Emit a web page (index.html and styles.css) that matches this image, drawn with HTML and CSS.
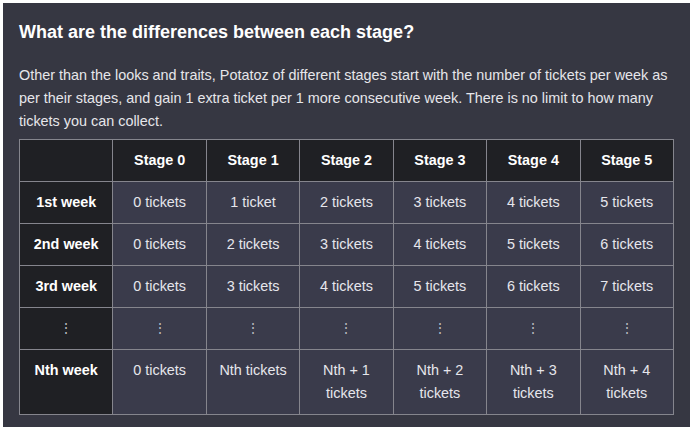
FILE: index.html
```html
<!DOCTYPE html>
<html>
<head>
<meta charset="utf-8">
<link rel="stylesheet" href="styles.css">
</head>
<body>
<div class="panel">
  <h2 class="title">What are the differences between each stage?</h2>
  <p class="intro">Other than the looks and traits, Potatoz of different stages start with the number of tickets per week as per their stages, and gain 1 extra ticket per 1 more consecutive week. There is no limit to how many tickets you can collect.</p>
  <table class="grid">
    <thead>
      <tr><th></th><th>Stage 0</th><th>Stage 1</th><th>Stage 2</th><th>Stage 3</th><th>Stage 4</th><th>Stage 5</th></tr>
    </thead>
    <tbody>
      <tr><th>1st week</th><td>0 tickets</td><td>1 ticket</td><td>2 tickets</td><td>3 tickets</td><td>4 tickets</td><td>5 tickets</td></tr>
      <tr><th>2nd week</th><td>0 tickets</td><td>2 tickets</td><td>3 tickets</td><td>4 tickets</td><td>5 tickets</td><td>6 tickets</td></tr>
      <tr><th>3rd week</th><td>0 tickets</td><td>3 tickets</td><td>4 tickets</td><td>5 tickets</td><td>6 tickets</td><td>7 tickets</td></tr>
      <tr class="dots"><th>⋮</th><td>⋮</td><td>⋮</td><td>⋮</td><td>⋮</td><td>⋮</td><td>⋮</td></tr>
      <tr><th>Nth week</th><td>0 tickets</td><td>Nth tickets</td><td>Nth + 1 tickets</td><td>Nth + 2 tickets</td><td>Nth + 3 tickets</td><td>Nth + 4 tickets</td></tr>
    </tbody>
  </table>
</div>
</body>
</html>
```
FILE: styles.css
```css
html, body {
  margin: 0;
  padding: 0;
  background: #ffffff;
}
.panel {
  margin: 3px 4px 0 3px;
  width: 687px;
  height: 424px;
  box-sizing: border-box;
  padding: 17px 16px 0 16px;
  background: #363742;
  font-family: "Liberation Sans", Arial, sans-serif;
  color: #e4e4ea;
}
.title {
  margin: 0;
  font-size: 18px;
  line-height: 24px;
  font-weight: bold;
  color: #ffffff;
}
.intro {
  margin: 20px 0 6px 0;
  font-size: 14.4px;
  line-height: 23px;
  color: #e6e6ea;
}
.grid {
  border-collapse: collapse;
  table-layout: fixed;
  width: 655px;
  font-size: 14.4px;
  line-height: 23px;
}
.grid th, .grid td {
  border: 1px solid #85858d;
  padding: 9px 8px 9px 8px;
  text-align: center;
  vertical-align: top;
}
.grid th {
  background: #1f2024;
  color: #ffffff;
  font-weight: bold;
}
.grid td {
  background: #3a3b4b;
  color: #e6e6ec;
}
.grid .dots th, .grid .dots td {
  color: #b8b8c0;
  font-weight: normal;
}
```
